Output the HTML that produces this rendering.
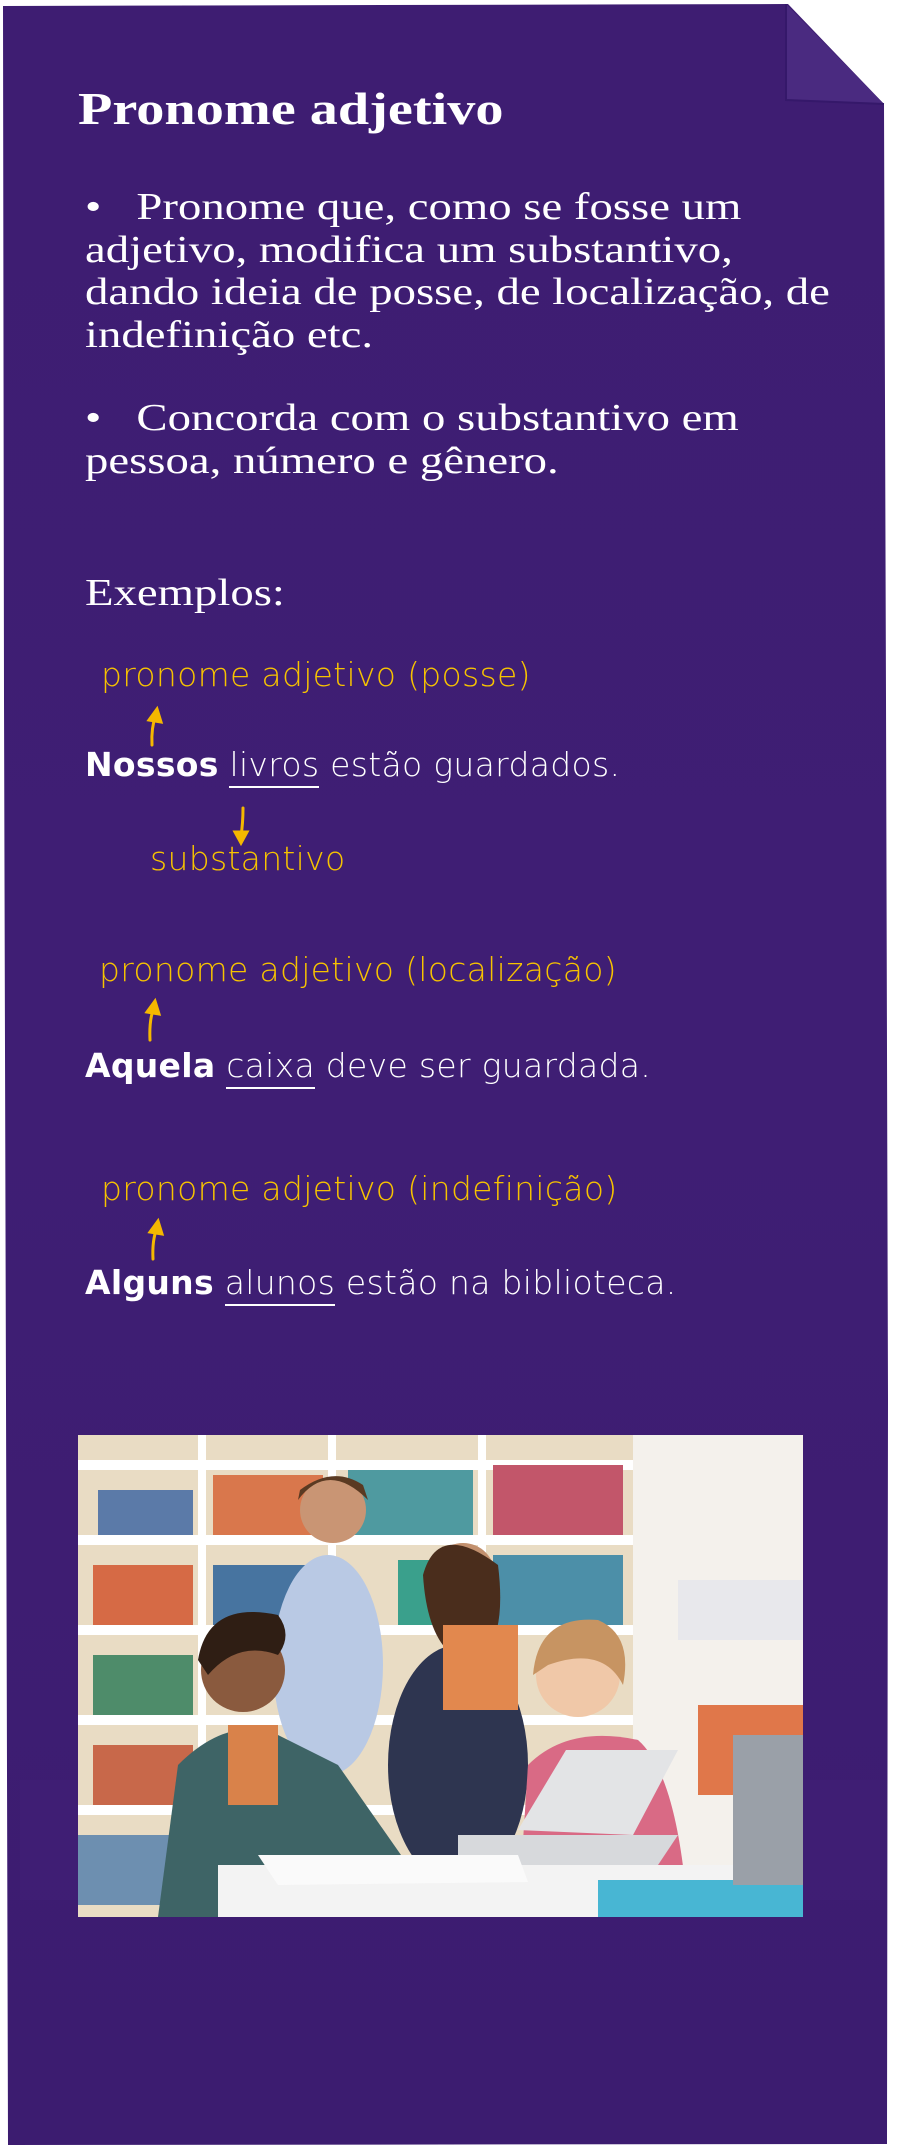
<!DOCTYPE html>
<html><head><meta charset="utf-8"><style>
html,body{margin:0;padding:0;background:#fff;}
body{width:898px;height:2147px;position:relative;overflow:hidden;}
.t{position:absolute;white-space:nowrap;color:#fff;transform-origin:0 0;}
.serif{font-family:"Liberation Serif",serif;}
.sans{font-family:"DejaVu Sans","Liberation Sans",sans-serif;font-weight:200;}
.y{color:#f7c300;}
.s{font-size:33px;letter-spacing:0.3px;}
u{text-decoration:none;border-bottom:2px solid #fff;padding-bottom:2px;}
</style></head><body>
<svg width="898" height="2147" style="position:absolute;left:0;top:0">
<defs>
<linearGradient id="g" x1="0" y1="0" x2="0" y2="1">
<stop offset="0" stop-color="#3e1d72"/>
<stop offset="0.5" stop-color="#3f1e74"/>
<stop offset="1" stop-color="#3c1c70"/>
</linearGradient>
</defs>
<path d="M3 6 L788 4 L884 104 L886 700 L888 1400 L887 2144 L8 2145 L6 1400 L4 700 Z" fill="url(#g)"/>
<path d="M786 4 L786 100 L884 104 Z" fill="#4a2a80"/>
<path d="M786 4 L786 100 L884 104" fill="none" stroke="#35186a" stroke-width="2"/>
<rect x="20" y="1780" width="860" height="120" fill="#44217a" opacity="0.4"/>
</svg>

<div class="t serif" style="left:78px;top:83px;font-size:45px;font-weight:bold;transform:scaleX(1.25);">Pronome adjetivo</div>
<div class="t serif" style="left:85px;top:186px;font-size:38px;line-height:42.5px;transform:scaleX(1.23);">
•&nbsp;&nbsp; Pronome que, como se fosse um<br>adjetivo, modifica um substantivo,<br>dando ideia de posse, de localização, de<br>indefinição etc.</div>
<div class="t serif" style="left:85px;top:397px;font-size:38px;line-height:43px;transform:scaleX(1.23);">
•&nbsp;&nbsp; Concorda com o substantivo em<br>pessoa, número e gênero.</div>
<div class="t serif" style="left:85px;top:571px;font-size:38px;transform:scaleX(1.23);">Exemplos:</div>

<div class="t sans y s" style="left:101px;top:655px;">pronome adjetivo (posse)</div>
<div class="t sans s" style="left:85px;top:745px;"><b style="font-weight:bold">Nossos</b> <u>livros</u> estão guardados.</div>
<div class="t sans y s" style="left:150px;top:839px;">substantivo</div>

<div class="t sans y s" style="left:99px;top:950px;">pronome adjetivo (localização)</div>
<div class="t sans s" style="left:85px;top:1046px;"><b style="font-weight:bold">Aquela</b> <u>caixa</u> deve ser guardada.</div>

<div class="t sans y s" style="left:101px;top:1169px;">pronome adjetivo (indefinição)</div>
<div class="t sans s" style="left:85px;top:1263px;"><b style="font-weight:bold">Alguns</b> <u>alunos</u> estão na biblioteca.</div>

<svg width="898" height="1400" style="position:absolute;left:0;top:0" fill="none" stroke="#f5b800" stroke-width="3" stroke-linecap="round">
<path d="M152 745 Q151 728 156 714"/><path d="M149 720 L157 709 L161 722 Z" fill="#f5b800"/>
<path d="M243 808 Q243 823 241 836"/><path d="M235 832 L241 843 L247 832 Z" fill="#f5b800"/>
<path d="M150 1040 Q149 1020 154 1007"/><path d="M147 1012 L155 1001 L159 1014 Z" fill="#f5b800"/>
<path d="M153 1259 Q152 1240 157 1228"/><path d="M150 1232 L158 1221 L162 1234 Z" fill="#f5b800"/>
</svg>

<svg width="725" height="482" style="position:absolute;left:78px;top:1435px">
<rect width="725" height="482" fill="#f1ebe0"/>
<rect x="0" y="0" width="555" height="482" fill="#e9dcc4"/>
<rect x="555" y="0" width="170" height="482" fill="#f4f1ec"/>
<g fill="#fff">
<rect x="0" y="25" width="555" height="10"/><rect x="0" y="100" width="555" height="10"/>
<rect x="0" y="190" width="555" height="10"/><rect x="0" y="280" width="555" height="10"/>
<rect x="0" y="370" width="555" height="10"/>
<rect x="120" y="0" width="8" height="482"/><rect x="250" y="0" width="8" height="482"/><rect x="400" y="0" width="8" height="482"/>
</g>
<g>
<rect x="20" y="55" width="95" height="45" fill="#5b7aa8"/><rect x="135" y="40" width="110" height="60" fill="#d9774c"/>
<rect x="270" y="35" width="125" height="65" fill="#4f9aa0"/><rect x="415" y="30" width="130" height="70" fill="#c2566a"/>
<rect x="15" y="130" width="100" height="60" fill="#d66a45"/><rect x="135" y="130" width="110" height="60" fill="#4774a0"/>
<rect x="320" y="125" width="75" height="65" fill="#3aa08c"/><rect x="415" y="120" width="130" height="70" fill="#4c8fa8"/>
<rect x="15" y="220" width="100" height="60" fill="#4e8c6a"/><rect x="15" y="310" width="100" height="60" fill="#c8684a"/>
<rect x="0" y="400" width="110" height="70" fill="#6d8fb0"/>
<rect x="600" y="145" width="125" height="60" fill="#e8e8ec"/>
<rect x="620" y="270" width="105" height="90" fill="#e0774a"/>
</g>
<ellipse cx="250" cy="230" rx="55" ry="110" fill="#b9c9e4"/>
<circle cx="255" cy="75" r="33" fill="#c99574"/><path d="M220 65 Q250 25 290 65 L285 50 Q255 30 222 55Z" fill="#5a3a22"/>
<ellipse cx="380" cy="330" rx="70" ry="120" fill="#2e3550"/>
<circle cx="385" cy="140" r="32" fill="#c2906e"/><path d="M345 140 Q360 85 420 130 Q430 210 395 230 Q350 220 345 140Z" fill="#4a2d1c"/>
<rect x="365" y="190" width="75" height="85" fill="#e2884e"/>
<path d="M80 482 L100 330 Q150 280 200 300 L260 330 L330 430 L300 482Z" fill="#3e6466"/>
<circle cx="165" cy="235" r="42" fill="#8a5a3e"/><path d="M120 225 Q130 165 200 180 Q215 200 200 220 Q160 205 130 240Z" fill="#2f1e14"/>
<rect x="150" y="290" width="50" height="80" fill="#d9824a"/>
<path d="M440 482 L450 330 Q490 290 560 305 Q600 340 610 482Z" fill="#d96a85"/>
<circle cx="500" cy="240" r="42" fill="#f0c8a8"/><path d="M455 240 Q460 180 520 185 Q555 200 545 250 Q525 210 470 230Z" fill="#c79462"/>
<path d="M380 430 L580 430 L600 400 L380 400Z" fill="#d7d9dc"/>
<path d="M440 395 L488 315 L600 315 L555 400Z" fill="#e3e4e6"/>
<rect x="140" y="430" width="585" height="52" fill="#f3f3f3"/>
<path d="M180 420 L440 420 L450 447 L200 450Z" fill="#fafafa"/>
<path d="M520 445 L725 445 L725 482 L520 482Z" fill="#48b6d3"/>
<rect x="655" y="300" width="70" height="150" fill="#9aa0a8"/>
</svg>
</body></html>
